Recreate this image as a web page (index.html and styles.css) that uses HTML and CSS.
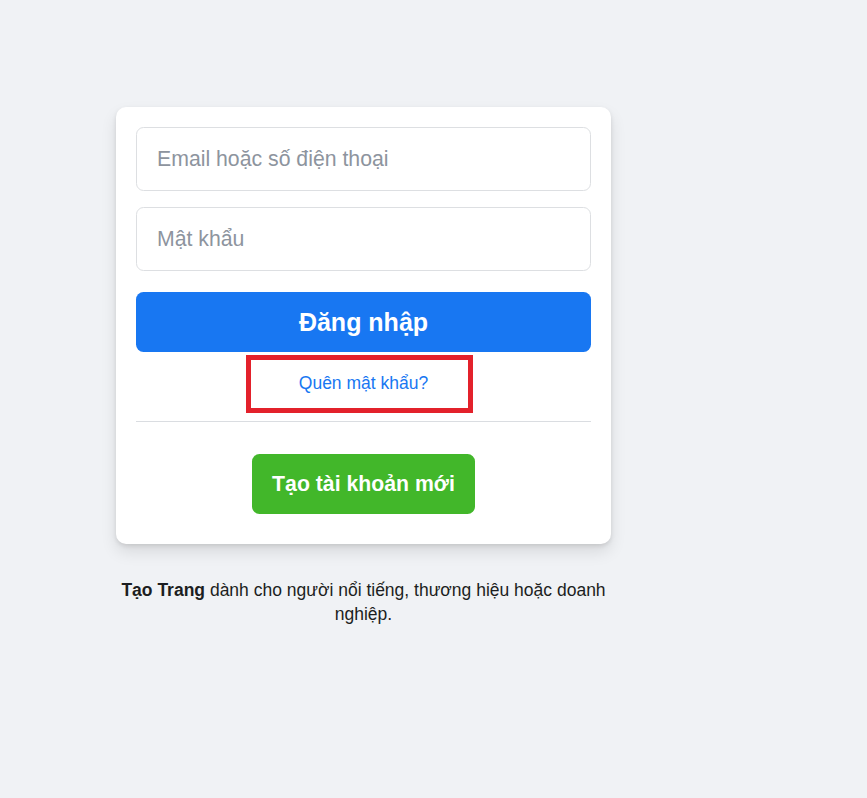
FILE: index.html
```html
<!DOCTYPE html>
<html lang="vi">
<head>
<meta charset="utf-8">
<title>Đăng nhập</title>
<link rel="stylesheet" href="styles.css">
</head>
<body>
<div class="page">
  <div class="column">
    <form class="card">
      <input class="field" type="text" placeholder="Email hoặc số điện thoại">
      <input class="field field-gap" type="password" placeholder="Mật khẩu">
      <button class="login" type="button">Đăng nhập</button>
      <div class="forgot-row">
        <a class="forgot" href="#">Quên mật khẩu?</a>
        <span class="highlight"></span>
      </div>
      <div class="signup-row">
        <button class="signup" type="button">Tạo tài khoản mới</button>
      </div>
    </form>
    <p class="pages"><b>Tạo Trang</b> dành cho người nổi tiếng, thương hiệu hoặc doanh nghiệp.</p>
  </div>
</div>
</body>
</html>
```

FILE: styles.css
```css
html, body {
  margin: 0;
  padding: 0;
}

body {
  background: #f0f2f5;
  font-family: "Liberation Sans", Arial, sans-serif;
  color: #1c1e21;
}

.page {
  padding: 107px 0 0 116px;
}

.column {
  width: 495px;
}

.card {
  background: #fff;
  border-radius: 10px;
  box-shadow: 0 2px 4px rgba(0, 0, 0, 0.1), 0 8px 16px rgba(0, 0, 0, 0.1);
  padding: 20px 20px 30px;
  display: flex;
  flex-direction: column;
  margin: 0;
}

.field {
  box-sizing: border-box;
  height: 64px;
  width: 100%;
  border: 1px solid #dddfe2;
  border-radius: 7.5px;
  padding: 0 20px;
  font-family: inherit;
  font-size: 21.25px;
  color: #1d2129;
  outline: none;
  background: #fff;
}

.field::placeholder {
  color: #8d949e;
}

.field-gap {
  margin-top: 16px;
}

.login {
  margin-top: 21px;
  height: 60px;
  border: none;
  border-radius: 7.5px;
  background: #1877f2;
  color: #fff;
  font-family: inherit;
  font-size: 25px;
  font-weight: bold;
  cursor: pointer;
}

.forgot-row {
  position: relative;
  padding: 21px 0 27px;
  text-align: center;
  line-height: 20px;
}

.forgot {
  font-size: 17.5px;
  color: #1877f2;
  text-decoration: none;
}

.highlight {
  position: absolute;
  left: 110px;
  top: 3px;
  width: 227px;
  height: 58px;
  box-sizing: border-box;
  border: 5px solid #e3212b;
  pointer-events: none;
}

.signup-row {
  border-top: 1px solid #dadde1;
  padding-top: 32px;
  display: flex;
  justify-content: center;
}

.signup {
  height: 60px;
  padding: 0 20px;
  border: none;
  border-radius: 7.5px;
  background: #42b72a;
  color: #fff;
  font-family: inherit;
  font-size: 21.25px;
  font-weight: bold;
  cursor: pointer;
}

.pages {
  margin: 34px 0 0;
  text-align: center;
  font-size: 17.5px;
  line-height: 24px;
  color: #1c1e21;
}

.pages b {
  font-weight: bold;
}
```
